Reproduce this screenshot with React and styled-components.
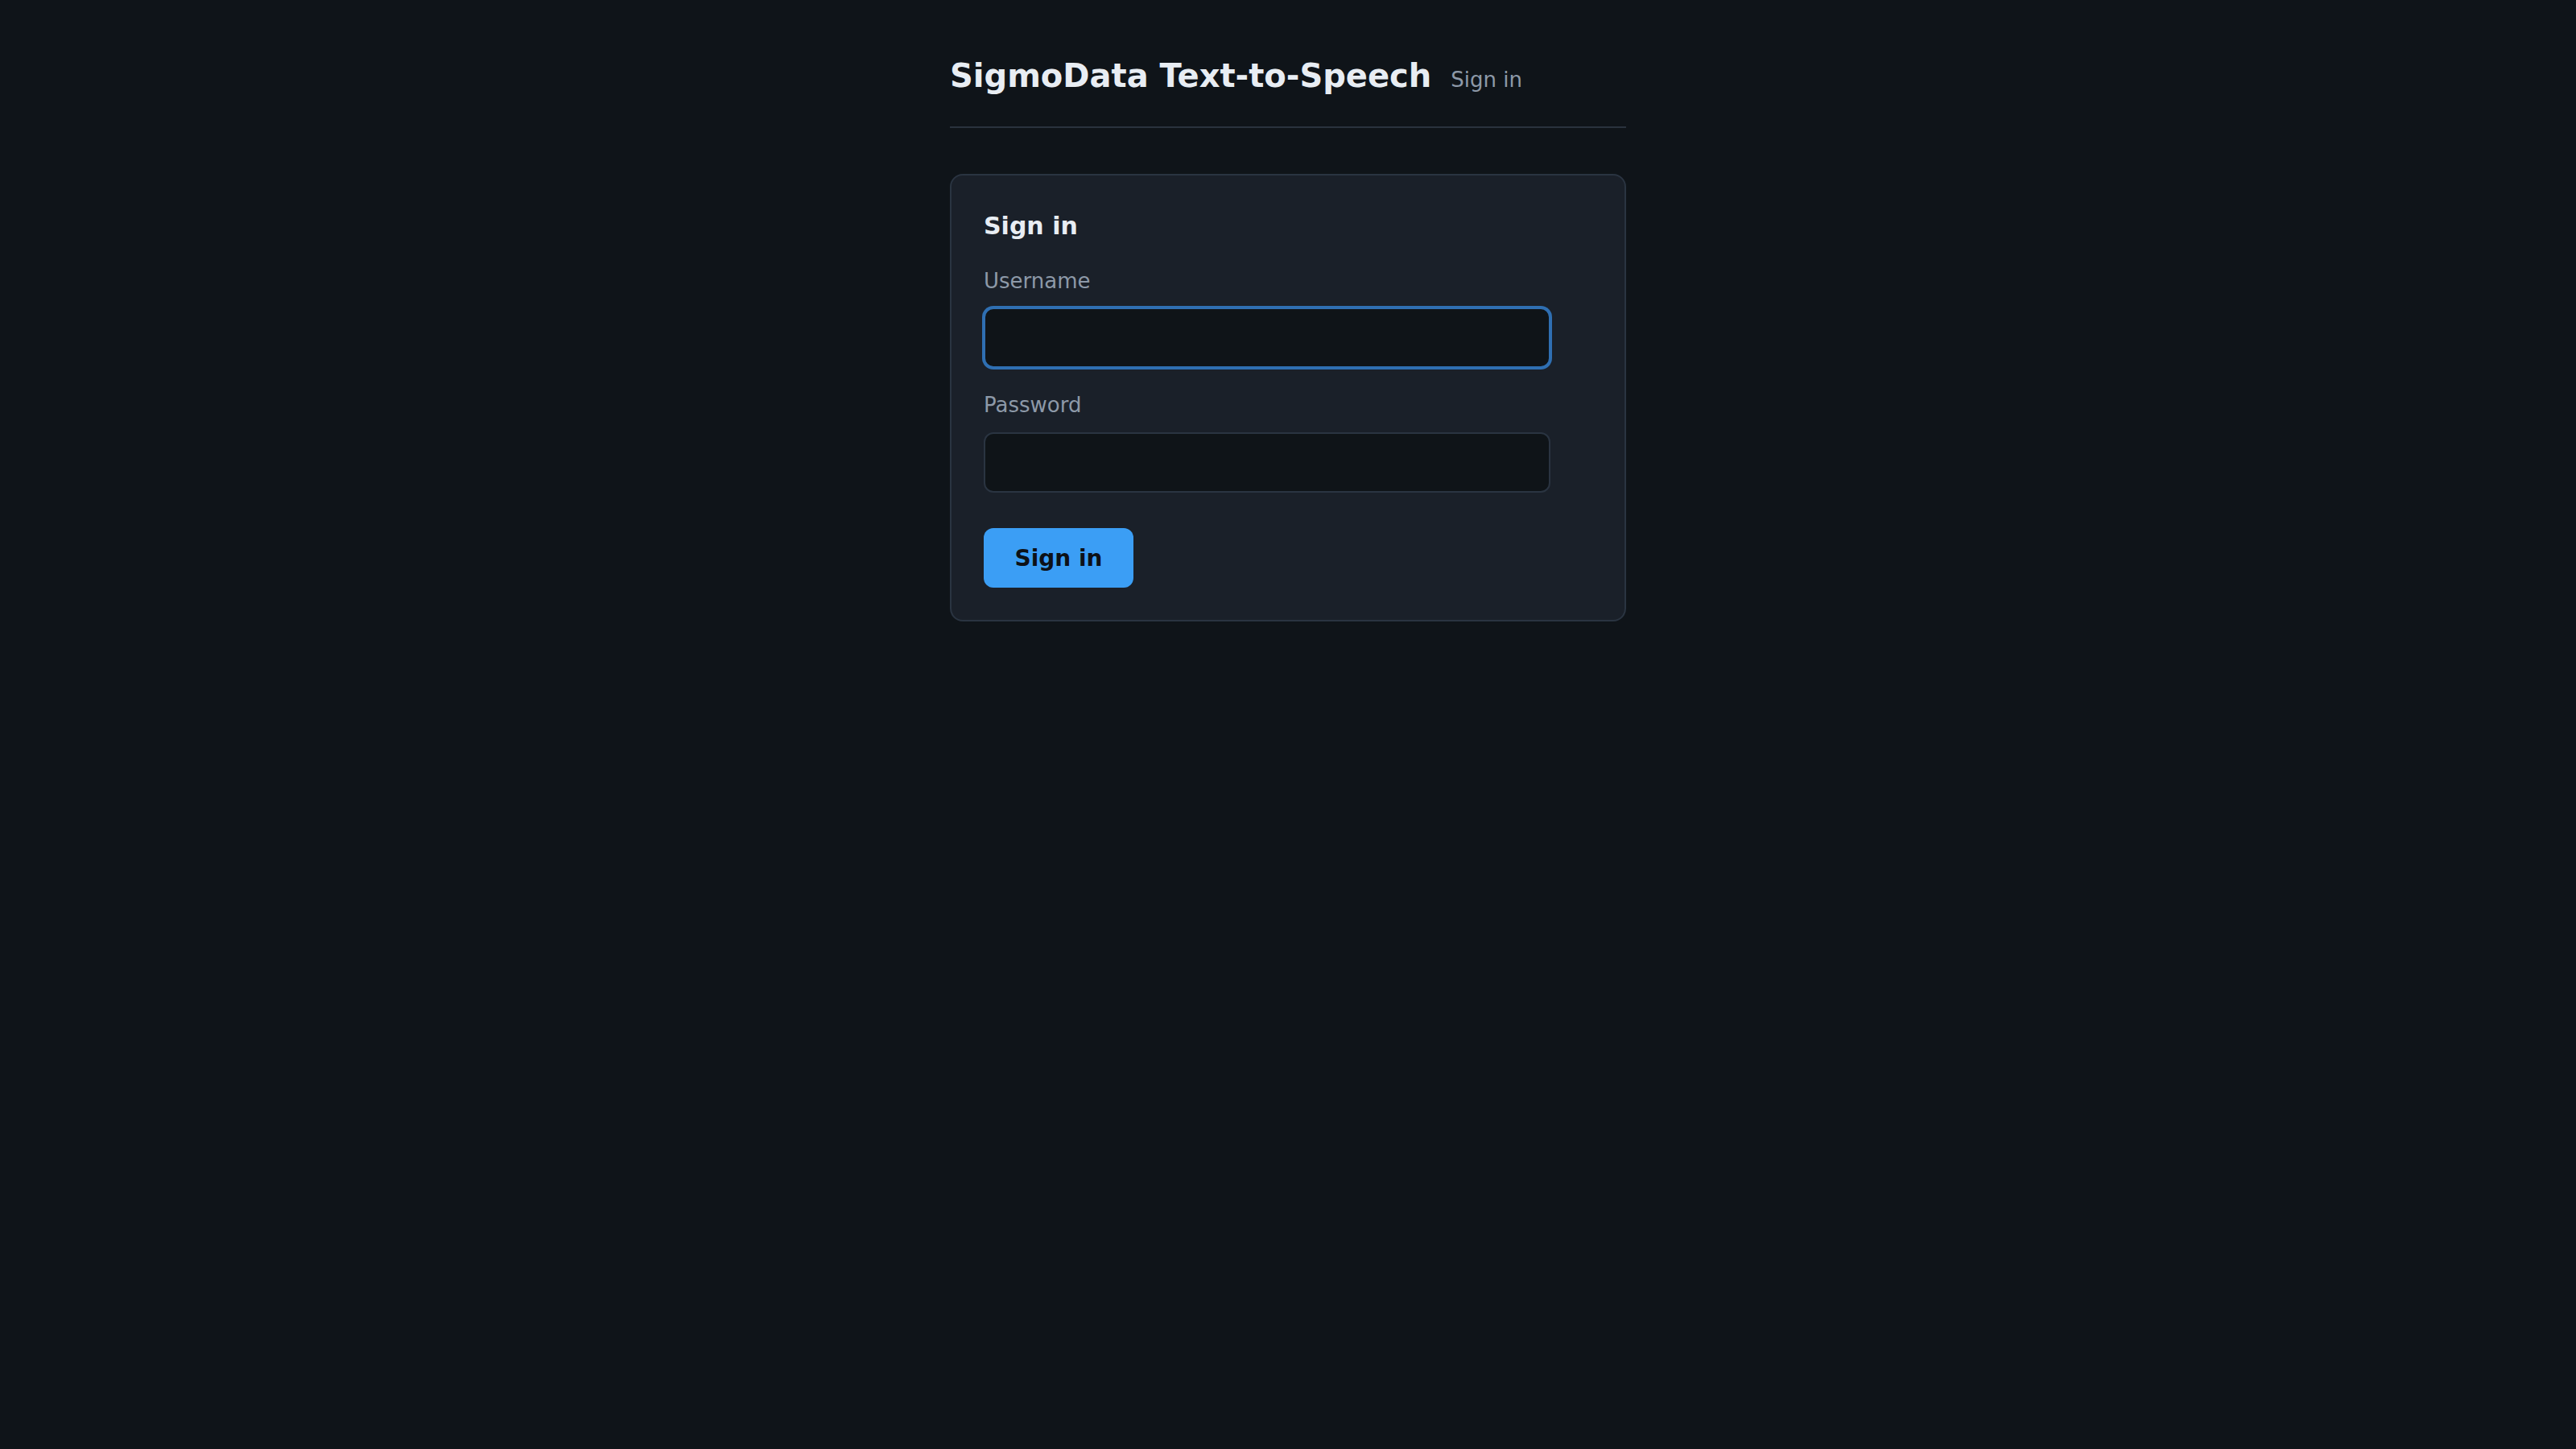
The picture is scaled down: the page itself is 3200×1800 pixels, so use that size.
import React from "react";
import styled, { createGlobalStyle } from "styled-components";

const Global = createGlobalStyle`
  html, body {
    margin: 0;
    padding: 0;
    background: #0f1419;
    min-height: 100%;
  }
  body {
    font-family: "DejaVu Sans", "Liberation Sans", sans-serif;
    color: #e6edf3;
  }
  * { box-sizing: border-box; }
`;

const Page = styled.div`
  min-height: 1800px;
  display: flex;
  justify-content: center;
  padding-top: 70px;
`;

const Column = styled.div`
  width: 840px;
  display: flex;
  flex-direction: column;
`;

const Header = styled.header`
  display: flex;
  align-items: baseline;
  gap: 24px;
  padding-bottom: 39px;
  border-bottom: 2px solid #2a323d;
`;

const Title = styled.h1`
  margin: 0;
  font-size: 40px;
  line-height: 48px;
  font-weight: 700;
  color: #e8edf3;
`;

const NavLink = styled.a`
  font-size: 26px;
  color: #8d99a8;
  text-decoration: none;
`;

const Card = styled.section`
  margin-top: 57px;
  background: #1a2029;
  border: 2px solid #2a3441;
  border-radius: 16px;
  padding: 40px;
  display: flex;
  flex-direction: column;
  align-items: flex-start;
`;

const CardTitle = styled.h2`
  margin: 0;
  font-size: 30px;
  line-height: 45px;
  font-weight: 700;
  color: #e8edf3;
`;

const Label = styled.label`
  display: block;
  margin-top: ${(p) => p.$gap}px;
  font-size: 26px;
  line-height: 39px;
  color: #8d99a8;
`;

const Input = styled.input`
  margin-top: ${(p) => p.$gap}px;
  width: 704px;
  height: 75px;
  background: #0f1418;
  border: 2px solid ${(p) => (p.$focused ? "#2f6fb2" : "#2a3441")};
  box-shadow: ${(p) => (p.$focused ? "0 0 0 2px #2f6fb2" : "none")};
  border-radius: 12px;
  padding: 0 20px;
  font-family: inherit;
  font-size: 28px;
  color: #e6edf3;
  outline: none;
`;

const Button = styled.button`
  margin-top: 44px;
  height: 74px;
  width: 186px;
  padding: 0;
  background: #3b9ef5;
  border: none;
  border-radius: 12px;
  font-family: inherit;
  font-size: 28px;
  font-weight: 700;
  color: #0d1117;
  cursor: pointer;
`;

export default function App() {
  return (
    <>
      <Global />
      <Page>
        <Column>
          <Header>
            <Title>SigmoData Text-to-Speech</Title>
            <NavLink href="#">Sign in</NavLink>
          </Header>
          <Card>
            <CardTitle>Sign in</CardTitle>
            <Label $gap={27} htmlFor="username">Username</Label>
            <Input id="username" $gap={13} $focused type="text" />
            <Label $gap={27} htmlFor="password">Password</Label>
            <Input id="password" $gap={14} type="password" />
            <Button type="button">Sign in</Button>
          </Card>
        </Column>
      </Page>
    </>
  );
}
